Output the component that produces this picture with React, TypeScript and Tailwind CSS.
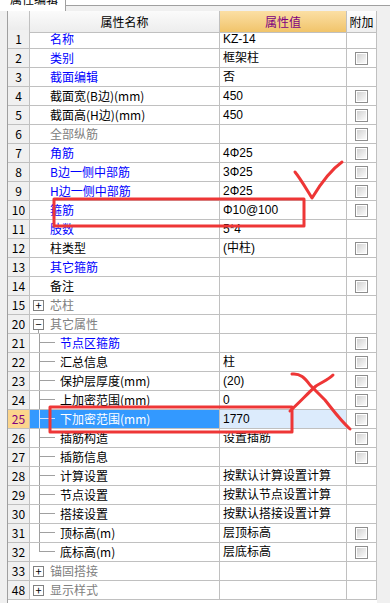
import React from "react";

type Row = {
    no: number;
    name: string;
    value?: string;
    color?: "blue" | "black" | "gray";
    kind?: "plain" | "group" | "child";
    open?: boolean;
    last?: boolean;
    check?: boolean;
    selected?: boolean;
};

const rows: Row[] = [
    { no: 1, name: "名称", value: "KZ-14", color: "blue" },
    { no: 2, name: "类别", value: "框架柱", color: "blue", check: true },
    { no: 3, name: "截面编辑", value: "否", color: "blue" },
    { no: 4, name: "截面宽(B边)(mm)", value: "450", check: true },
    { no: 5, name: "截面高(H边)(mm)", value: "450", check: true },
    { no: 6, name: "全部纵筋", color: "gray", check: true },
    { no: 7, name: "角筋", value: "4Φ25", color: "blue", check: true },
    { no: 8, name: "B边一侧中部筋", value: "3Φ25", color: "blue", check: true },
    { no: 9, name: "H边一侧中部筋", value: "2Φ25", color: "blue", check: true },
    { no: 10, name: "箍筋", value: "Φ10@100", color: "blue", check: true },
    { no: 11, name: "肢数", value: "5*4", color: "blue" },
    { no: 12, name: "柱类型", value: "(中柱)", check: true },
    { no: 13, name: "其它箍筋", color: "blue" },
    { no: 14, name: "备注", check: true },
    { no: 15, name: "芯柱", color: "gray", kind: "group" },
    { no: 20, name: "其它属性", color: "gray", kind: "group", open: true },
    { no: 21, name: "节点区箍筋", color: "blue", kind: "child", check: true },
    { no: 22, name: "汇总信息", value: "柱", kind: "child", check: true },
    { no: 23, name: "保护层厚度(mm)", value: "(20)", kind: "child", check: true },
    { no: 24, name: "上加密范围(mm)", value: "0", kind: "child", check: true },
    { no: 25, name: "下加密范围(mm)", value: "1770", kind: "child", check: true, selected: true },
    { no: 26, name: "插筋构造", value: "设置插筋", kind: "child", check: true },
    { no: 27, name: "插筋信息", kind: "child", check: true },
    { no: 28, name: "计算设置", value: "按默认计算设置计算", kind: "child" },
    { no: 29, name: "节点设置", value: "按默认节点设置计算", kind: "child" },
    { no: 30, name: "搭接设置", value: "按默认搭接设置计算", kind: "child" },
    { no: 31, name: "顶标高(m)", value: "层顶标高", kind: "child", check: true },
    { no: 32, name: "底标高(m)", value: "层底标高", kind: "child", check: true, last: true },
    { no: 33, name: "锚固搭接", color: "gray", kind: "group" },
    { no: 48, name: "显示样式", color: "gray", kind: "group" },
];

const textColor = {
    blue: "text-[#0000ff]",
    black: "text-black",
    gray: "text-[#808080]",
};

function CheckBox() {
    return (
        <div className="w-[13px] h-[13px] border border-[#8e8e8e] p-px bg-white">
            <div className="w-full h-full bg-gradient-to-br from-[#d2d2d2] to-[#fbfbfb]" />
        </div>
    );
}

function NameCell({ row }: { row: Row }) {
    const color = row.selected ? "text-white" : textColor[row.color ?? "black"];
    const line = row.selected ? "border-[#cfe3ff]" : "border-[#a0a0a0]";
    if (row.kind === "group") {
        return (
            <div className="flex h-full pl-[3px]">
                <div className="flex flex-col w-[11px]">
                    <div className="flex-1" />
                    <div className="w-[11px] h-[11px] border border-[#808080] bg-white flex items-center justify-center text-[11px] leading-none text-black">
                        {row.open ? "−" : "+"}
                    </div>
                    <div className={`flex-1 ml-[5px] ${row.open ? "border-l border-[#a0a0a0]" : ""}`} />
                </div>
                <span className={`ml-[6px] self-center ${color}`}>{row.name}</span>
            </div>
        );
    }
    if (row.kind === "child") {
        return (
            <div className="flex h-full">
                <div className="w-[9px]" />
                <div className="w-[16px] flex flex-col">
                    <div className={`h-[9px] border-l border-b ${line}`} />
                    <div className={`flex-1 ${row.last ? "" : `border-l ${line}`}`} />
                </div>
                <span className={`ml-[5px] self-center ${color}`}>{row.name}</span>
            </div>
        );
    }
    return (
        <div className="flex h-full items-center pl-[20px]">
            <span className={color}>{row.name}</span>
        </div>
    );
}

export default function App() {
    return (
        <div
            className="relative w-[390px] h-[603px] overflow-hidden bg-[#f0f0f0] text-[12px]"
            style={{ fontFamily: '"Noto Sans CJK SC", "Liberation Sans", sans-serif' }}
        >
            <div className="flex h-[11px]">
                <div className="w-[66px] h-[11px] bg-white border-r border-[#a0a0a0] overflow-hidden flex items-end pl-[10px]">
                    <span className="text-[12px] leading-[14px] -mb-[4px] translate-y-[-9px]">属性编辑</span>
                </div>
                <div className="flex-1 flex flex-col">
                    <div className="h-[6px] bg-white border-b border-[#a0a0a0]" />
                    <div className="flex-1 bg-[#f0f0f0]" />
                </div>
            </div>

            <div className="flex">
                <div className="w-[8px] border-r border-[#a0a0a0] h-[592px]" />
                <div className="grid grid-cols-[22px_190px_127px_30px] auto-rows-[19px] bg-white">
                    <div className="h-[22px] border-r border-b border-[#c0c0c0] bg-gradient-to-b from-[#fafafa] to-[#ebebeb]" />
                    <div className="h-[22px] border-r border-b border-[#c0c0c0] bg-gradient-to-b from-[#fbfbfb] to-[#ededed] flex items-center justify-center text-black">
                        属性名称
                    </div>
                    <div className="h-[22px] border-r border-b border-[#c0c0c0] bg-gradient-to-b from-[#fbdfa4] to-[#f1c46a] flex items-center justify-center text-[#800080]">
                        属性值
                    </div>
                    <div className="h-[22px] border-r border-b border-[#c0c0c0] bg-gradient-to-b from-[#fdfdfd] to-[#efefef] flex items-center justify-center text-black">
                        附加
                    </div>

                    {rows.map((row) => (
                        <React.Fragment key={row.no}>
                            <div
                                className={`border-r border-b border-[#c0c0c0] flex items-center justify-center ${
                                    row.selected ? "bg-[#fcd58c] text-[#800080]" : "bg-[#f0f0f0] text-black"
                                }`}
                            >
                                {row.no}
                            </div>
                            <div className={`border-r border-b border-[#c0c0c0] ${row.selected ? "bg-[#3399ff]" : ""}`}>
                                <NameCell row={row} />
                            </div>
                            <div
                                className={`border-r border-b border-[#c0c0c0] flex items-center pl-[3px] text-black font-[family-name:Liberation_Sans,Noto_Sans_CJK_SC,sans-serif] ${
                                    row.selected ? "bg-[#dcebfc]" : ""
                                }`}
                            >
                                {row.value}
                            </div>
                            <div className="border-r border-b border-[#c0c0c0] flex items-center justify-center">
                                {row.check && <CheckBox />}
                            </div>
                        </React.Fragment>
                    ))}
                </div>
                <div className="flex-1" />
            </div>

            <svg className="absolute inset-0 pointer-events-none" width="390" height="603" viewBox="0 0 390 603">
                <g fill="none" stroke="#ee3636" strokeWidth="3" strokeLinecap="round" strokeLinejoin="round">
                    <rect x="54" y="199" width="250" height="27" strokeLinecap="butt" />
                    <rect x="50" y="407" width="242" height="25" strokeLinecap="butt" />
                    <path d="M295 172 C300 178 307 190 312 198 C318 188 328 172 342 162" />
                    <path d="M292 374 C300 373 305 378 310 385 L325 400 C333 410 340 420 350 429" />
                    <path d="M333 375 C328 380 322 382 316 386 C308 393 300 402 290 411" />
                </g>
            </svg>
        </div>
    );
}
